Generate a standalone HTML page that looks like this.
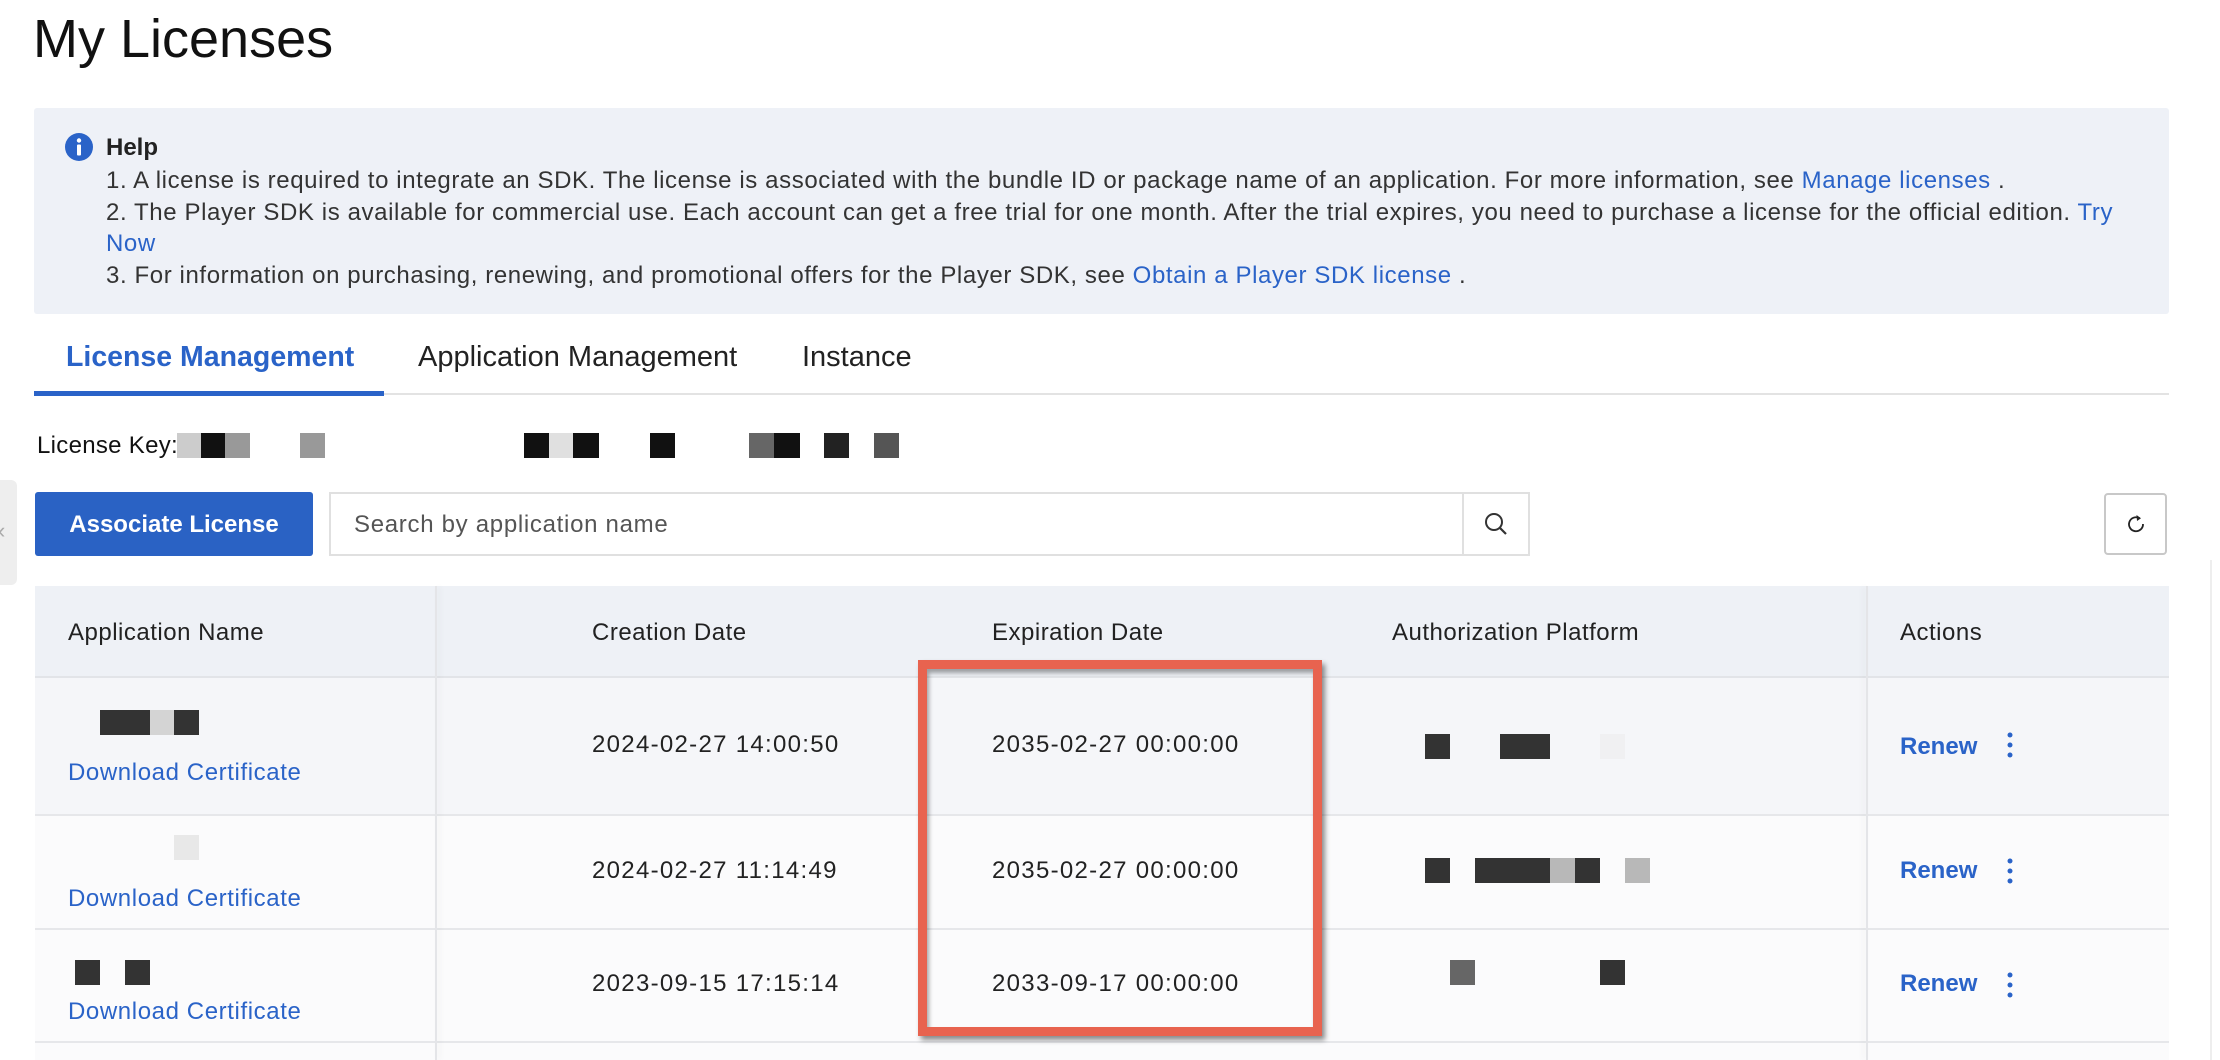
<!DOCTYPE html>
<html><head><meta charset="utf-8">
<style>
*{margin:0;padding:0;box-sizing:border-box}
body{width:2220px;height:1060px;overflow:hidden;background:#fff;font-family:"Liberation Sans",Arial,sans-serif;color:#333;position:relative}
.a{position:absolute;white-space:nowrap}
.blue{color:#2a63c8}
.r{position:absolute}
.t{font-size:24px;letter-spacing:0.5px;color:#222}
.d{font-size:24px;letter-spacing:1.3px;color:#222}
.dc{font-size:24px;letter-spacing:0.6px;color:#2a63c8}
</style></head><body>
<div class="a" style="left:33px;top:4px;font-size:54px;color:#111;line-height:70px">My Licenses</div>

<div class="r" style="left:34px;top:108px;width:2135px;height:206px;background:#eef1f7;border-radius:3px"></div>
<svg class="r" style="left:65px;top:133px" width="28" height="28" viewBox="0 0 28 28"><circle cx="14" cy="14" r="14" fill="#2a63c8"/><circle cx="14" cy="7.5" r="2.2" fill="#fff"/><rect x="12" y="11.5" width="4" height="11" rx="1" fill="#fff"/></svg>
<div class="a" style="left:106px;top:134px;font-size:24px;font-weight:bold;color:#222;line-height:28px">Help</div>
<div class="a" style="left:106px;top:165px;font-size:24px;letter-spacing:0.6px;line-height:31.7px;color:#333">
1. A license is required to integrate an SDK. The license is associated with the bundle ID or package name of an application. For more information, see <span class="blue">Manage licenses</span> .<br>
2. The Player SDK is available for commercial use. Each account can get a free trial for one month. After the trial expires, you need to purchase a license for the official edition. <span class="blue">Try</span><br>
<span class="blue">Now</span><br>
3. For information on purchasing, renewing, and promotional offers for the Player SDK, see <span class="blue">Obtain a Player SDK license</span> .
</div>

<div class="a" style="left:66px;top:341px;font-size:28.5px;font-weight:bold;color:#2a63c8">License Management</div>
<div class="a" style="left:418px;top:341px;font-size:29px;color:#222">Application Management</div>
<div class="a" style="left:802px;top:341px;font-size:29px;color:#222">Instance</div>
<div class="r" style="left:34px;top:393px;width:2135px;height:2px;background:#e3e3e3"></div>
<div class="r" style="left:34px;top:391px;width:350px;height:5px;background:#2a63c8"></div>

<div class="a t" style="left:37px;top:432px;color:#111;letter-spacing:0.3px">License Key:</div>
<div class="r" style="left:177px;top:433px;width:24px;height:25px;background:#ccc"></div>
<div class="r" style="left:201px;top:433px;width:24px;height:25px;background:#111"></div>
<div class="r" style="left:225px;top:433px;width:25px;height:25px;background:#999"></div>
<div class="r" style="left:300px;top:433px;width:25px;height:25px;background:#999"></div>
<div class="r" style="left:524px;top:433px;width:25px;height:25px;background:#111"></div>
<div class="r" style="left:549px;top:433px;width:24px;height:25px;background:#e0e0e0"></div>
<div class="r" style="left:573px;top:433px;width:26px;height:25px;background:#111"></div>
<div class="r" style="left:650px;top:433px;width:25px;height:25px;background:#111"></div>
<div class="r" style="left:749px;top:433px;width:25px;height:25px;background:#666"></div>
<div class="r" style="left:774px;top:433px;width:26px;height:25px;background:#111"></div>
<div class="r" style="left:824px;top:433px;width:25px;height:25px;background:#222"></div>
<div class="r" style="left:874px;top:433px;width:25px;height:25px;background:#555"></div>

<div class="r" style="left:0;top:480px;width:17px;height:105px;background:#eee;border-radius:0 6px 6px 0"></div>
<div class="a" style="left:-2px;top:518px;font-size:22px;color:#aaa">‹</div>

<div class="r" style="left:35px;top:492px;width:278px;height:64px;background:#2a62c4;border-radius:3px"></div>
<div class="a" style="left:35px;top:511px;width:278px;text-align:center;font-size:24px;font-weight:bold;color:#fff">Associate License</div>
<div class="r" style="left:329px;top:492px;width:1201px;height:64px;border:2px solid #e0e0e0;background:#fff"></div>
<div class="r" style="left:1462px;top:492px;width:2px;height:64px;background:#e0e0e0"></div>
<div class="a" style="left:354px;top:511px;font-size:24px;letter-spacing:0.7px;color:#555">Search by application name</div>
<svg class="r" style="left:1483px;top:511px" width="26" height="26" viewBox="0 0 26 26"><circle cx="11" cy="11" r="8" fill="none" stroke="#333" stroke-width="2"/><line x1="17" y1="17" x2="23" y2="23" stroke="#333" stroke-width="2.2"/></svg>
<div class="r" style="left:2104px;top:493px;width:63px;height:62px;border:2px solid #c8c8c8;border-radius:4px;background:#fff"></div>
<svg class="r" style="left:2124px;top:512px" width="24" height="24" viewBox="0 0 24 24"><path d="M15.5 6.2 A7 7 0 1 0 19 12" fill="none" stroke="#222" stroke-width="1.8"/><path d="M12.5 3 L17 6.3 L13 9 Z" fill="#222"/></svg>

<!-- table -->
<div class="r" style="left:35px;top:586px;width:2134px;height:91px;background:#eef1f6"></div>
<div class="r" style="left:35px;top:677px;width:2134px;height:138px;background:#f5f6f9"></div>
<div class="r" style="left:35px;top:815px;width:2134px;height:245px;background:#fbfbfc"></div>
<div class="r" style="left:35px;top:676px;width:2134px;height:2px;background:#e2e4e8"></div>
<div class="r" style="left:35px;top:814px;width:2134px;height:2px;background:#e6e7ea"></div>
<div class="r" style="left:35px;top:928px;width:2134px;height:2px;background:#e6e7ea"></div>
<div class="r" style="left:35px;top:1041px;width:2134px;height:2px;background:#e6e7ea"></div>
<div class="r" style="left:435px;top:586px;width:2px;height:474px;background:#e4e5e8;box-shadow:3px 0 6px rgba(0,0,0,0.06)"></div>
<div class="r" style="left:1866px;top:586px;width:2px;height:474px;background:#e4e5e8;box-shadow:-3px 0 6px rgba(0,0,0,0.06)"></div>
<div class="r" style="left:2210px;top:560px;width:2px;height:500px;background:#eee"></div>

<div class="a t" style="left:68px;top:619px">Application Name</div>
<div class="a t" style="left:592px;top:619px">Creation Date</div>
<div class="a t" style="left:992px;top:619px">Expiration Date</div>
<div class="a t" style="left:1392px;top:619px">Authorization Platform</div>
<div class="a t" style="left:1900px;top:619px">Actions</div>

<!-- row1 -->
<div class="r" style="left:100px;top:710px;width:50px;height:25px;background:#333"></div>
<div class="r" style="left:150px;top:710px;width:24px;height:25px;background:#d4d4d4"></div>
<div class="r" style="left:174px;top:710px;width:25px;height:25px;background:#333"></div>
<div class="a dc" style="left:68px;top:759px">Download Certificate</div>
<div class="a d" style="left:592px;top:731px">2024-02-27 14:00:50</div>
<div class="a d" style="left:992px;top:731px">2035-02-27 00:00:00</div>
<div class="r" style="left:1425px;top:734px;width:25px;height:25px;background:#333"></div>
<div class="r" style="left:1500px;top:734px;width:50px;height:25px;background:#333"></div>
<div class="r" style="left:1600px;top:734px;width:25px;height:25px;background:#f0f0f2"></div>
<div class="a blue" style="left:1900px;top:733px;font-size:24px;font-weight:bold">Renew</div>

<!-- row2 -->
<div class="r" style="left:174px;top:835px;width:25px;height:25px;background:#e8e8e8"></div>
<div class="a dc" style="left:68px;top:885px">Download Certificate</div>
<div class="a d" style="left:592px;top:857px">2024-02-27 11:14:49</div>
<div class="a d" style="left:992px;top:857px">2035-02-27 00:00:00</div>
<div class="r" style="left:1425px;top:858px;width:25px;height:25px;background:#333"></div>
<div class="r" style="left:1475px;top:858px;width:75px;height:25px;background:#333"></div>
<div class="r" style="left:1550px;top:858px;width:25px;height:25px;background:#b8b8b8"></div>
<div class="r" style="left:1575px;top:858px;width:25px;height:25px;background:#333"></div>
<div class="r" style="left:1625px;top:858px;width:25px;height:25px;background:#b8b8b8"></div>
<div class="a blue" style="left:1900px;top:857px;font-size:24px;font-weight:bold">Renew</div>

<!-- row3 -->
<div class="r" style="left:75px;top:960px;width:25px;height:25px;background:#333"></div>
<div class="r" style="left:125px;top:960px;width:25px;height:25px;background:#333"></div>
<div class="a dc" style="left:68px;top:998px">Download Certificate</div>
<div class="a d" style="left:592px;top:970px">2023-09-15 17:15:14</div>
<div class="a d" style="left:992px;top:970px">2033-09-17 00:00:00</div>
<div class="r" style="left:1450px;top:960px;width:25px;height:25px;background:#666"></div>
<div class="r" style="left:1600px;top:960px;width:25px;height:25px;background:#333"></div>
<div class="a blue" style="left:1900px;top:970px;font-size:24px;font-weight:bold">Renew</div>

<!-- kebabs -->
<svg class="r" style="left:2003px;top:731px" width="14" height="28" viewBox="0 0 14 28"><circle cx="7" cy="4" r="2.5" fill="#2a63c8"/><circle cx="7" cy="14" r="2.5" fill="#2a63c8"/><circle cx="7" cy="24" r="2.5" fill="#2a63c8"/></svg>
<svg class="r" style="left:2003px;top:857px" width="14" height="28" viewBox="0 0 14 28"><circle cx="7" cy="4" r="2.5" fill="#2a63c8"/><circle cx="7" cy="14" r="2.5" fill="#2a63c8"/><circle cx="7" cy="24" r="2.5" fill="#2a63c8"/></svg>
<svg class="r" style="left:2003px;top:971px" width="14" height="28" viewBox="0 0 14 28"><circle cx="7" cy="4" r="2.5" fill="#2a63c8"/><circle cx="7" cy="14" r="2.5" fill="#2a63c8"/><circle cx="7" cy="24" r="2.5" fill="#2a63c8"/></svg>

<!-- red highlight -->
<div class="r" style="left:918px;top:660px;width:404px;height:376px;border:9px solid #e8634f;box-shadow:3px 4px 5px rgba(0,0,0,0.45), inset 2px 4px 4px rgba(0,0,0,0.35)"></div>
</body></html>
